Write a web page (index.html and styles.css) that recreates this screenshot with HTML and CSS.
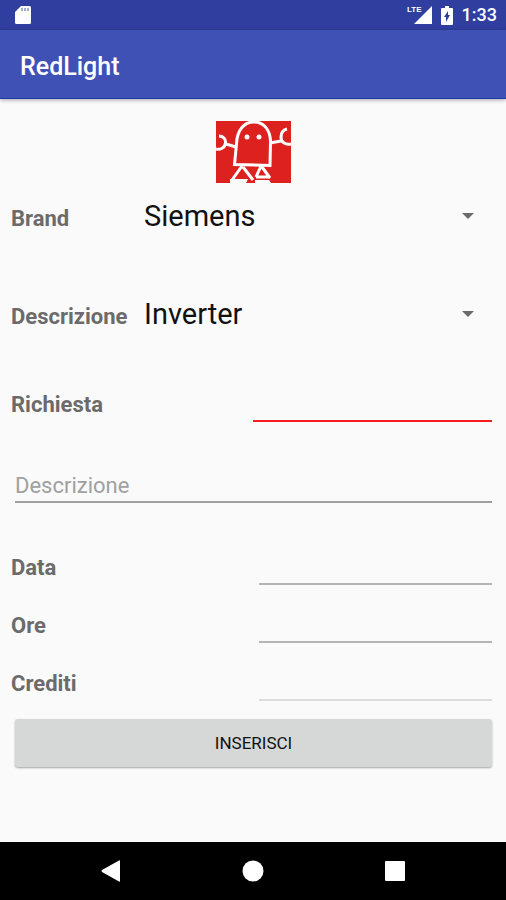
FILE: index.html
```html
<!DOCTYPE html>
<html lang="it">
<head>
<meta charset="utf-8">
<meta name="viewport" content="width=device-width, initial-scale=1">
<title>RedLight</title>
<link rel="stylesheet" href="styles.css">
</head>
<body>
<div class="screen">
  <div class="status-bar">
    <svg class="sd-icon" width="16" height="20" viewBox="0 0 16 20" aria-hidden="true">
      <path fill="#fff" d="M6 1h8.500q1.500 0 1.500 1.500v15q0 1.500-1.500 1.500h-13Q0 19 0 17.500V7z"/>
      <path stroke="#8790ca" stroke-width="1.500" d="M7 3v3M10 3v3M13 3v3"/>
    </svg>
    <div class="status-icons">
      <span class="signal">
        <svg width="24" height="20" viewBox="0 0 24 20" aria-hidden="true"><path fill="#fff" d="M24 1v18H6z"/></svg>
        <span class="network">LTE</span>
      </span>
      <svg width="12" height="19" viewBox="0 0 12 19" aria-hidden="true">
        <path fill="#fff" d="M4 0h4v2h3q1 0 1 1v15q0 1-1 1H1q-1 0-1-1V3q0-1 1-1h3z"/>
        <path fill="#303f9f" d="M7 5v4h2l-4 7v-5H3z"/>
      </svg>
      <span class="clock">1:33</span>
    </div>
  </div>
  <header class="app-bar"><h1>RedLight</h1></header>
  <main class="content">
    <svg class="logo" width="75" height="62" viewBox="0 0 75 62" role="img" aria-label="RedLight robot">
      <path fill="#dc211f" d="M0 0h75v62H0z"/>
      <g fill="none" stroke="#fff" stroke-width="3">
        <path d="M18.500 43.500L20.500 23C21 9 28 1 38 1C48 1 54 9 54.500 20L54 44.500Z"/>
        <path d="M20 26L10 23M54 22L65 20"/>
        <path d="M3 15C7 15 10 18 9.500 22C9 27 4 29 0 28M71 8C67 9 65 12 65 16C65 21 69 24 75 23"/>
        <path d="M26 45L16 59M27 46L37 59M45 45L40 56M46 46L54 57M15 59.500H31M40 56H54"/>
      </g>
      <path fill="#fff" d="M39 59h14l2 3H39zM14 58h18l-2 4H14z"/>
      <circle cx="31" cy="16" r="2.500" fill="#fff"/><circle cx="43" cy="16" r="2.500" fill="#fff"/>
    </svg>
    <form class="form">
      <div class="choice">
        <label for="brand">Brand</label>
        <div class="spinner"><select id="brand"><option>Siemens</option></select></div>
      </div>
      <div class="choice">
        <label for="type">Descrizione</label>
        <div class="spinner"><select id="type"><option>Inverter</option></select></div>
      </div>
      <div class="field field-request">
        <label for="request">Richiesta</label>
        <input id="request" type="text">
      </div>
      <input class="description" type="text" placeholder="Descrizione" aria-label="Descrizione">
      <div class="field">
        <label for="date">Data</label>
        <input id="date" type="text">
      </div>
      <div class="field">
        <label for="hours">Ore</label>
        <input id="hours" type="text">
      </div>
      <div class="field field-credits">
        <label for="credits">Crediti</label>
        <input id="credits" type="text">
      </div>
      <button class="submit" type="button">INSERISCI</button>
    </form>
  </main>
  <nav class="nav-bar">
    <button type="button" aria-label="Indietro"><svg width="22" height="22" viewBox="0 0 22 22"><path fill="#fff" d="M20 1v20q0 1-1 .500L2 12q-1-1 0-2L19 .500q1-.500 1 .500z"/></svg></button>
    <button type="button" aria-label="Home"><svg width="22" height="22" viewBox="0 0 22 22"><circle cx="11" cy="11" r="10.500" fill="#fff"/></svg></button>
    <button type="button" aria-label="Recenti"><svg width="22" height="22" viewBox="0 0 22 22"><rect x="1" y="1" width="20" height="20" rx="1" fill="#fff"/></svg></button>
  </nav>
</div>
</body>
</html>
```
FILE: styles.css
```css
* {
  box-sizing: border-box;
}

body {
  margin: 0;
  background: #fafafa;
  font-family: Roboto, "Liberation Sans", sans-serif;
}

.screen {
  display: flex;
  flex-direction: column;
  min-height: 100vh;
}

.status-bar {
  display: flex;
  align-items: center;
  justify-content: space-between;
  height: 30px;
  padding: 0 9px 0 15px;
  background: #303f9f;
  color: #fff;
}

.status-icons {
  display: flex;
  align-items: center;
  gap: 9px;
}

.signal {
  position: relative;
  display: flex;
}

.network {
  position: absolute;
  top: 1px;
  right: 10px;
  font-family: "Liberation Sans", sans-serif;
  font-size: 8px;
  font-weight: 700;
  line-height: 8px;
}

.clock {
  font-size: 18px;
  font-weight: 500;
  line-height: 30px;
}

.app-bar {
  padding: 21px 20px 16px;
  background: #3f51b5;
  border-bottom: 1px solid #2338a4;
  box-shadow: 0 1px 4px rgba(0, 0, 0, 0.35);
  color: #fff;
}

.app-bar h1 {
  margin: 0;
  font-size: 25px;
  font-weight: 500;
  line-height: 31px;
}

.content {
  flex: 1;
  padding: 22px 14px 24px;
}

.logo {
  display: block;
  margin: 0 auto;
}

.form {
  display: flex;
  flex-direction: column;
  margin-left: -3px;
}

label {
  color: #6b6b6b;
  font-size: 22px;
  font-weight: 700;
  line-height: 26px;
}

select,
input {
  width: 100%;
  min-width: 0;
  margin: 0;
  border: 0;
  border-radius: 0;
  outline: 0;
  background: transparent;
  font-family: inherit;
}

.choice {
  display: grid;
  grid-template-columns: 133px 1fr;
  align-items: baseline;
  margin-bottom: 32px;
}

.spinner {
  position: relative;
}

.spinner::after {
  content: "";
  position: absolute;
  top: 30px;
  right: 18px;
  border: 6px solid transparent;
  border-top-color: #6b6b6b;
  border-bottom: 0;
  pointer-events: none;
}

select {
  height: 66px;
  padding: 0;
  appearance: none;
  color: #111;
  font-size: 29px;
}

.field {
  display: grid;
  grid-template-columns: 1fr 1fr;
  column-gap: 14px;
  align-items: end;
  margin-bottom: 16px;
}

.field label {
  margin-bottom: 4px;
}

.field input {
  height: 42px;
  border-bottom: 2px solid #b5b5b5;
  font-size: 22px;
}

.field-request {
  column-gap: 2px;
  margin: 1px 0 39px;
}

.field-request input {
  border-bottom-color: #f51d1d;
}

.field-credits {
  margin-bottom: 18px;
}

.field-credits input {
  border-bottom-color: #dcdcdc;
}

.description {
  width: auto;
  height: 42px;
  margin: 0 0 40px 4px;
  padding: 8px 0 0;
  border-bottom: 2px solid #a0a0a0;
  font-size: 22px;
}

.description::placeholder {
  color: #a0a0a0;
  opacity: 1;
}

.submit {
  height: 48px;
  margin-left: 4px;
  padding: 0;
  border: 0;
  border-radius: 3px;
  background: #d6d7d7;
  box-shadow: 0 1px 2px rgba(0, 0, 0, 0.35);
  color: #111;
  font-family: inherit;
  font-size: 17px;
  font-weight: 400;
}

.nav-bar {
  display: flex;
  align-items: center;
  justify-content: center;
  gap: 98px;
  height: 58px;
  background: #000;
}

.nav-bar button {
  display: grid;
  place-items: center;
  width: 44px;
  height: 44px;
  padding: 0;
  border: 0;
  background: transparent;
}
```
